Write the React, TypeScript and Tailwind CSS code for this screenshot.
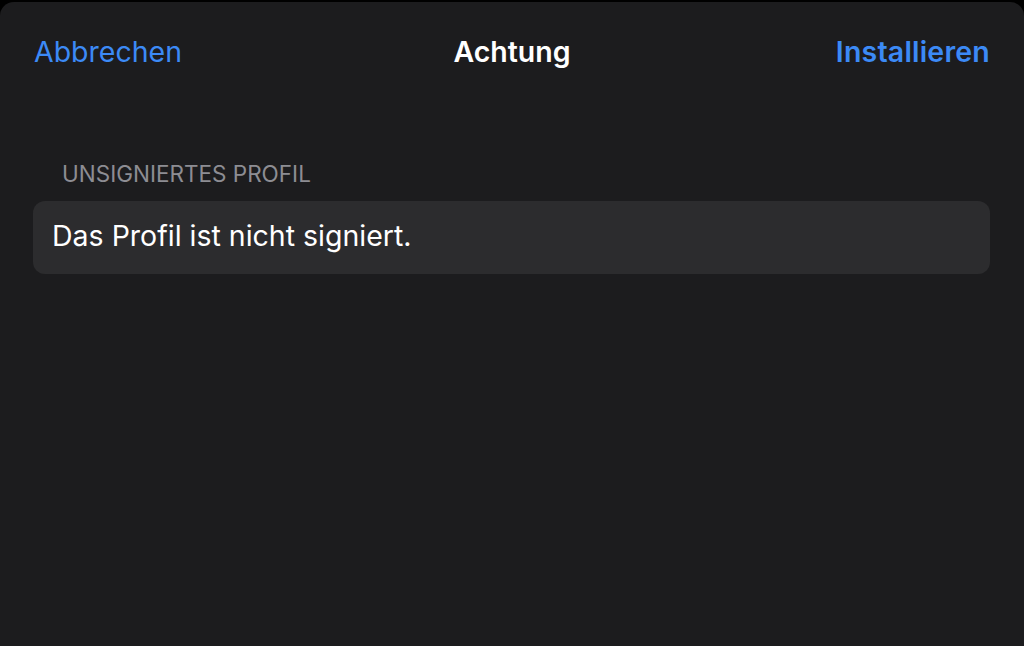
import React from "react";

const App = () => {
    return (
        <div className="w-[1024px] h-[646px] bg-black pt-[2px] overflow-hidden" style={{ fontFamily: "Inter, 'Noto Sans', sans-serif" }}>
            <div className="h-full bg-[#1c1c1e] rounded-t-[14px]">
                <div className="grid grid-cols-3 items-center h-[100px] px-[34px]">
                    <button className="justify-self-start text-[28.5px] text-[#3c8af6]">Abbrechen</button>
                    <h1 className="justify-self-center text-[28.5px] font-semibold text-white">Achtung</h1>
                    <button className="justify-self-end text-[28.5px] font-semibold text-[#3c8af6] tracking-[0.2px]">Installieren</button>
                </div>
                <div className="flex flex-col px-[33px] pt-[61px]">
                    <div className="px-[29px] text-[22.5px] text-[#8d8d93] uppercase leading-none">Unsigniertes Profil</div>
                    <div className="mt-[15px] mr-[1px] h-[73px] flex items-center px-[19px] rounded-[12px] bg-[#2c2c2e]">
                        <span className="text-[28.5px] text-white -mt-[1px]">Das Profil ist nicht signiert.</span>
                    </div>
                </div>
            </div>
        </div>
    );
};

export default App;
